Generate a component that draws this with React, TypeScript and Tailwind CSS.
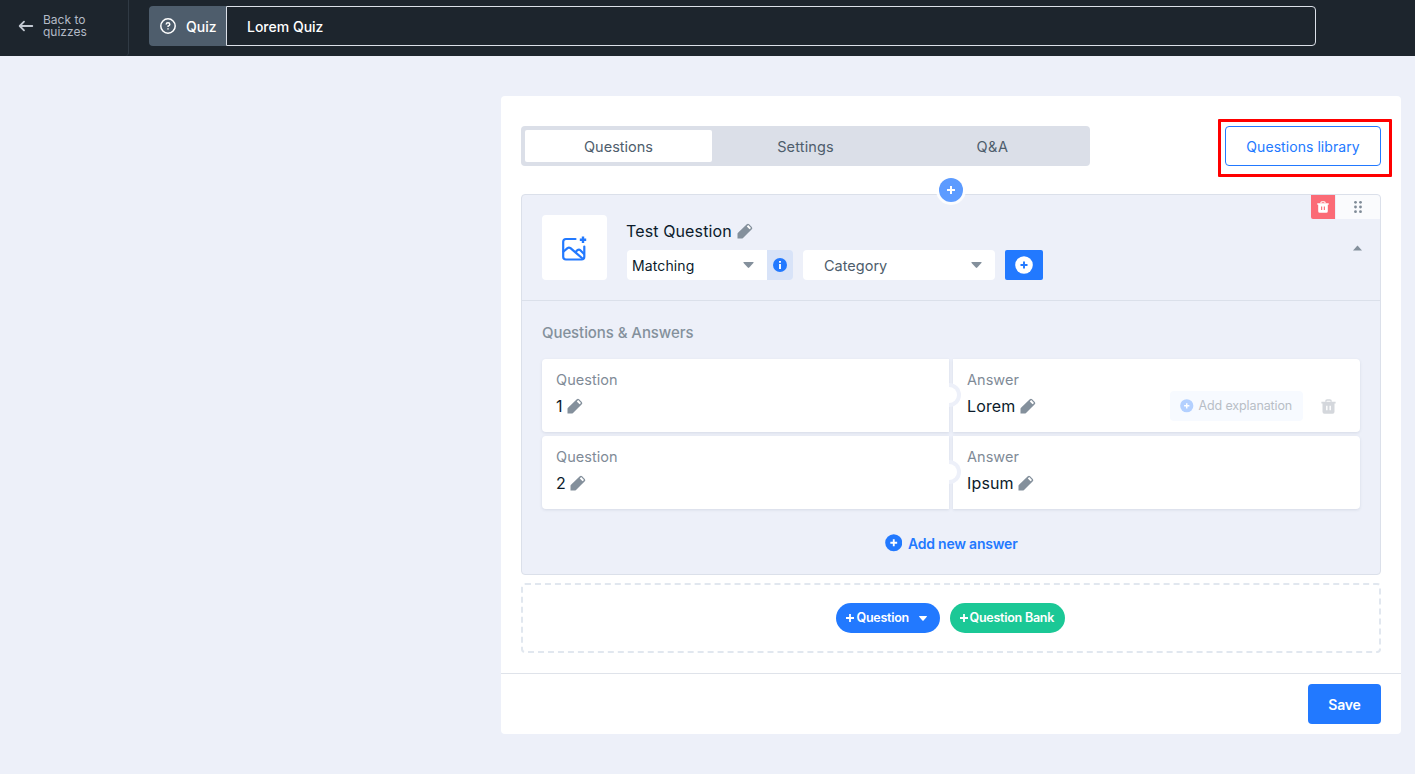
import type { ReactNode } from "react";

const Pencil = () => (
  <svg width="16" height="16" viewBox="0 0 16 16" className="shrink-0">
    <path d="M0.5 15.5V10.8Q.5 10.2 1 9.7L9.8 1.2Q11 .1 12.1 1.2L14.8 3.9Q15.9 5 14.8 6.2L6 14.9Q5.4 15.5 4.8 15.5Z" fill="#84909c" />
    <path d="M9.8 3.4L11.2 2.1L14 4.9L12.6 6.3Z" fill="#fff" />
  </svg>
);

const PlusCircle = ({ size, fill, plus }: { size: number; fill: string; plus: string }) => (
  <svg width={size} height={size} viewBox="0 0 18 18" className="shrink-0">
    <circle cx="9" cy="9" r="8.8" fill={fill} />
    <path d="M9 5.5V12.5M5.5 9H12.5" stroke={plus} strokeWidth="1.9" />
  </svg>
);

const Trash = ({ color, inner, size }: { color: string; inner: string; size: number }) => (
  <svg width={size} height={size} viewBox="0 0 16 16" className="shrink-0">
    <path d="M5.2 3V2.3Q5.2 1 6.5 1H9.5Q10.8 1 10.8 2.3V3" fill="none" stroke={color} strokeWidth="1.6" />
    <path d="M.4 3H15.6V4.9H14.4V13.6Q14.4 15.6 12.4 15.6H3.6Q1.6 15.6 1.6 13.6V4.9H.4Z" fill={color} />
    <path d="M6.2 7.2V12M9.8 7.2V12" stroke={inner} strokeWidth="1.5" />
  </svg>
);

const Caret = ({ className }: { className: string }) => (
  <svg width="11" height="6" viewBox="0 0 11 6" className={className}>
    <path d="M.9 0H10.1Q11 .3 10.4 1L6.2 5.6Q5.5 6.2 4.8 5.6L.6 1Q0 .3 .9 0Z" fill="currentColor" />
  </svg>
);

const Cell = ({ label, value, answer, children }: { label: string; value: string; answer?: boolean; children?: ReactNode }) => (
  <div
    className={
      answer
        ? "relative flex h-[73px] w-[407px] rounded-r bg-white pl-[14px] shadow-[0_1px_3px_rgba(60,80,110,0.13)]"
        : "flex h-[73px] w-[407px] rounded-l bg-white pl-[14px] shadow-[0_1px_3px_rgba(60,80,110,0.13)]"
    }
  >
    {answer && <div className="absolute top-6 -left-1 h-6 w-3 rounded-r-full border-4 border-l-0 border-[#edf0f9] bg-white" />}
    <div className="flex flex-col">
      <div className="mt-[11px] h-5 text-[14.5px] leading-5 tracking-[0.05px] text-[#7f8b97]">{label}</div>
      <div className="mt-[6px] flex h-5 items-center gap-[4px] text-base leading-5 tracking-[0.15px] text-[#0b1b2b]">
        <span>{value}</span>
        <Pencil />
      </div>
    </div>
    {children}
  </div>
);

export default function App() {
  return (
    <div className="min-h-[774px] w-full bg-[#edf0f9] font-['Inter',sans-serif]">
      <header className="flex h-14 bg-[#1d252d]">
        <div className="flex w-[129px] items-center rounded-br border-r border-[#303a44] pb-1 pl-[18px] text-[#b3bac6]">
          <svg width="16" height="12" viewBox="0 0 16 12" fill="none" stroke="#c3c9d2" strokeWidth="1.8">
            <path d="M14.3 6H2M6 1.7L1.7 6L6 10.3" strokeLinecap="round" strokeLinejoin="round" />
          </svg>
          <div className="ml-[9px] text-[12px] leading-3">
            Back to
            <br />
            quizzes
          </div>
        </div>
        <div className="mt-[6px] ml-5 flex h-10 w-[1167px]">
          <div className="flex w-[77px] items-center rounded-l bg-[#4e5d6c] pl-[11px] text-white">
            <svg width="16" height="16" viewBox="0 0 16 16" fill="none" stroke="#fff" strokeWidth="1.5">
              <circle cx="8" cy="8" r="7.2" />
              <path d="M6.2 6.5Q6.3 4.8 8 4.8Q9.8 4.8 9.8 6.4Q9.8 7.4 8.1 8.1V9M8 10.2V11.6" />
            </svg>
            <span className="ml-[10px] pt-[2px] text-sm font-medium">Quiz</span>
          </div>
          <div className="flex flex-1 items-center rounded-r border border-[#dbe0e8] pt-[2px] pl-5 text-sm font-medium text-white">Lorem Quiz</div>
        </div>
      </header>

      <main className="mt-10 ml-[501px] h-[638px] w-[900px] rounded bg-white">
        <div className="flex h-[577px] flex-col px-5 pt-[30px]">
          <div className="flex h-10 justify-between">
            <div className="flex w-[569px] rounded bg-[#dbdfe8] p-1 text-[14.5px] text-[#4e5d6c]">
              <div className="flex flex-1 items-center justify-center rounded-[2px] bg-white pt-[2px]">Questions</div>
              <div className="flex flex-1 items-center justify-center pt-[2px] tracking-[0.15px]">Settings</div>
              <div className="flex flex-1 items-center justify-center pt-[2px] tracking-[0.5px]">Q&amp;A</div>
            </div>
            <div className="relative">
              <button className="h-10 w-[156px] rounded border border-[#2279ff] pt-[2px] text-sm tracking-[0.06px] text-[#2279ff]">Questions library</button>
              <div className="absolute -top-[7px] -left-[7px] h-[58px] w-[174px] rounded-[1px] border-3 border-[#ff0000]" />
            </div>
          </div>

          <section className="relative mt-7 h-[381px] rounded border border-[#dbe0ea] bg-[#edf0f9]">
            <div className="absolute -top-[20px] left-[414px] rounded-full bg-white/80 p-[3px]">
              <div className="flex size-6 items-center justify-center rounded-full bg-[#5c9bff]">
                <svg width="8" height="8" viewBox="0 0 8 8">
                  <path d="M4 0V8M0 4H8" stroke="#fff" strokeWidth="2" />
                </svg>
              </div>
            </div>
            <div className="absolute top-0 right-0 flex h-6">
              <div className="flex w-6 items-center justify-center rounded-bl-[2px] bg-[#fb6b76]">
                <Trash size={12} color="#fff" inner="#fb6b76" />
              </div>
              <div className="ml-px flex w-11 items-center justify-center rounded-tr bg-[#fafbfd]">
                <svg width="10" height="14" viewBox="0 0 10 14" fill="#7f8b97">
                  <circle cx="2.5" cy="2.3" r="1.4" />
                  <circle cx="7.5" cy="2.3" r="1.4" />
                  <circle cx="2.5" cy="7" r="1.4" />
                  <circle cx="7.5" cy="7" r="1.4" />
                  <circle cx="2.5" cy="11.7" r="1.4" />
                  <circle cx="7.5" cy="11.7" r="1.4" />
                </svg>
              </div>
            </div>
            <div className="flex h-[106px] border-b border-[#dbe0ea] pt-5 pl-5">
              <div className="flex size-[65px] items-center justify-center rounded bg-white">
                <svg width="27" height="27" viewBox="0 0 27 27" fill="none" stroke="#2279ff" strokeWidth="2.2" strokeLinecap="round" strokeLinejoin="round">
                  <path d="M14.5 5H5Q2.2 5 2.2 7.7V22.8Q2.2 25.5 5 25.5H20.5Q23.3 25.5 23.3 22.8V12.5" />
                  <path d="M2.6 17.5L6.5 14.1Q8 13 9.5 14.2L21.5 24.5M14.8 17.7Q17.5 14.7 19.3 16.3L22.8 19.8" />
                  <path d="M22 2.6V9M18.8 5.8H25.2" strokeWidth="2.4" strokeLinecap="butt" />
                </svg>
              </div>
              <div className="ml-5 flex flex-col">
                <div className="-ml-px mt-[6px] flex h-5 items-center gap-[5px] text-base tracking-[0.12px] text-[#0b1b2b]">
                  <span>Test Question</span>
                  <Pencil />
                </div>
                <div className="mt-[9px] flex h-[30px]">
                  <div className="flex w-[140px] items-center justify-between rounded-l bg-white pr-[13px] pl-[5px] text-sm text-[#0b1b2b]">
                    <span className="pt-[2px] tracking-[0.12px]">Matching</span>
                    <Caret className="text-[#84909c]" />
                  </div>
                  <div className="flex w-[26px] items-center justify-center rounded-r bg-[#d8e3f8]">
                    <svg width="14" height="14" viewBox="0 0 14 14">
                      <circle cx="7" cy="7" r="7" fill="#2279ff" />
                      <path d="M7 3V4.8M7 6V11" stroke="#fff" strokeWidth="1.9" />
                    </svg>
                  </div>
                  <div className="ml-[10px] flex w-48 items-center justify-between rounded bg-white pr-[13px] pl-[21px] text-[14.5px] text-[#4e5d6c]">
                    <span className="pt-[2px]">Category</span>
                    <Caret className="text-[#84909c]" />
                  </div>
                  <div className="ml-[10px] flex w-[38px] items-center justify-center rounded-[2px] bg-[#2279ff] pr-px">
                    <PlusCircle size={18} fill="#fff" plus="#2279ff" />
                  </div>
                </div>
              </div>
              <svg width="9" height="6" viewBox="0 0 9 6" className="mt-[30px] mr-[18px] ml-auto">
                <path d="M4.5 .5L9 5.5H0Z" fill="#84909c" />
              </svg>
            </div>

            <div className="flex flex-col px-5">
              <h2 className="mt-[22px] h-5 text-[15px] leading-5 font-medium tracking-[-0.08px] text-[#84909c]">Questions &amp; Answers</h2>
              <div className="mt-4 flex gap-1">
                <Cell label="Question" value="1" />
                <Cell label="Answer" value="Lorem" answer>
                  <div className="mt-8 mr-[24px] ml-auto flex h-[30px] items-center">
                    <div className="flex h-[30px] w-[133px] items-center rounded bg-[#f7faff] pl-[10px] text-[12.5px] tracking-[-0.12px] whitespace-nowrap text-[#b8bec6]">
                      <PlusCircle size={13.5} fill="#b3d0ff" plus="#fff" />
                      <span className="ml-[5px]">Add explanation</span>
                    </div>
                    <div className="ml-[18px]">
                      <Trash size={15} color="#d4d7dc" inner="#fff" />
                    </div>
                  </div>
                </Cell>
              </div>
              <div className="mt-1 flex gap-1">
                <Cell label="Question" value="2" />
                <Cell label="Answer" value="Ipsum" answer />
              </div>
              <div className="mt-6 flex h-5 items-center justify-center gap-[6px] text-sm font-semibold tracking-[-0.22px] text-[#2279ff]">
                <PlusCircle size={17.5} fill="#2279ff" plus="#fff" />
                <span className="pt-[2px]">Add new answer</span>
              </div>
            </div>
          </section>

          <div className="mt-2 flex h-[70px] items-center justify-center gap-[10px] rounded border-2 border-dashed border-[#e1e7ef] pr-[2px] text-[12.5px] font-semibold tracking-[-0.25px] text-white">
            <div className="flex h-[30px] w-[104px] items-center rounded-full bg-[#2279ff] pl-[10px]">
              <svg width="8" height="8" viewBox="0 0 8 8">
                <path d="M4 0V8M0 4H8" stroke="#fff" strokeWidth="1.8" />
              </svg>
              <span className="ml-[3px]">Question</span>
              <svg width="8" height="5" viewBox="0 0 8 5" className="mr-[13px] ml-auto">
                <path d="M0 .3Q0 0 .5 0H7.5Q8 0 8 .5L4.6 4.5Q4 5 3.4 4.5L0 .5Z" fill="#fff" />
              </svg>
            </div>
            <div className="flex h-[30px] w-[115px] items-center rounded-full bg-[#1bc896] pl-[10px]">
              <svg width="8" height="8" viewBox="0 0 8 8">
                <path d="M4 0V8M0 4H8" stroke="#fff" strokeWidth="1.8" />
              </svg>
              <span className="ml-[2px] whitespace-nowrap">Question Bank</span>
            </div>
          </div>
        </div>
        <footer className="flex h-[61px] items-start justify-end border-t border-[#dfe3ea] pt-[10px] pr-5">
          <button className="h-10 w-[73px] rounded bg-[#2279ff] pt-[2px] text-sm font-semibold tracking-[-0.2px] text-white">Save</button>
        </footer>
      </main>
    </div>
  );
}
